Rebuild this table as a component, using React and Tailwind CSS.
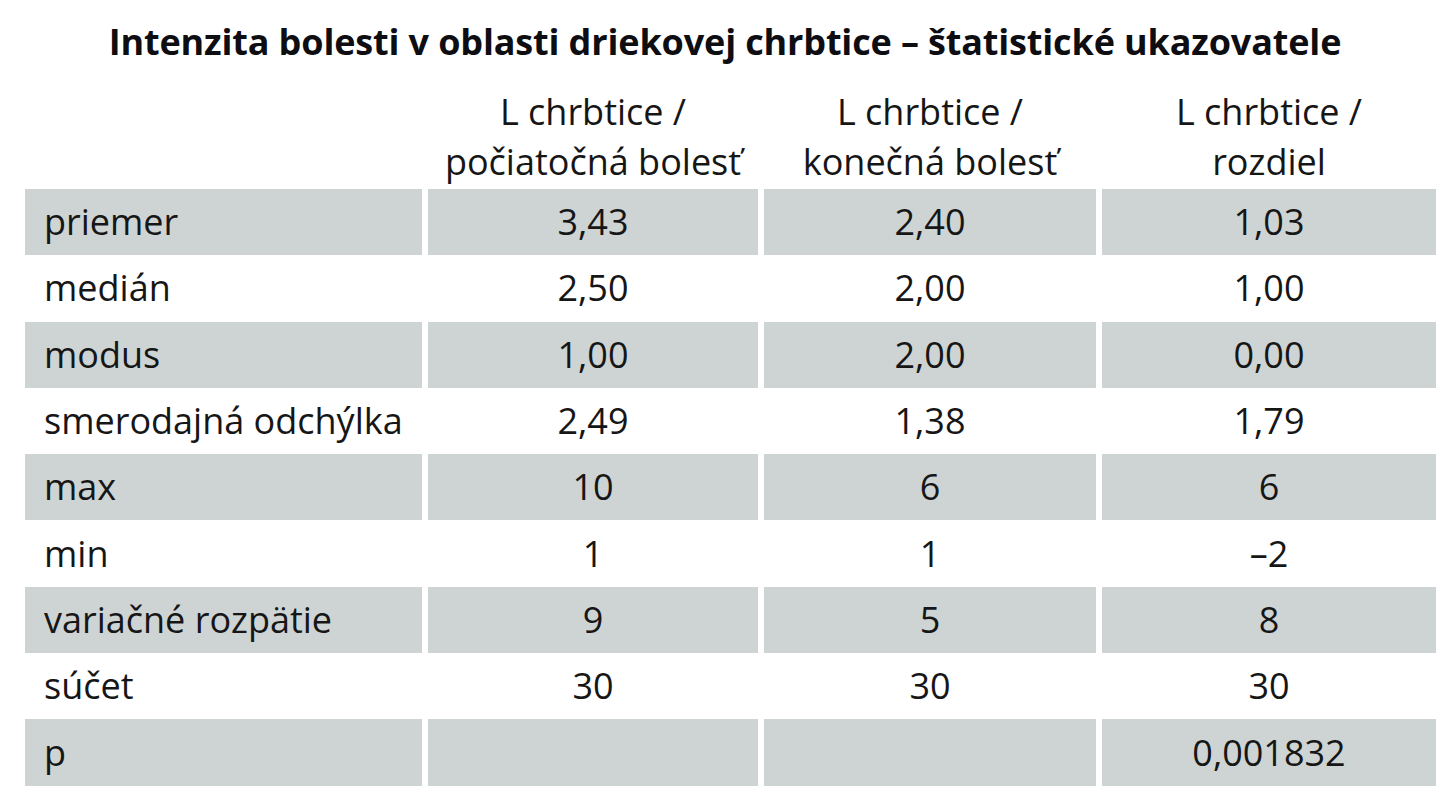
import React from "react";

const rows = [
  ["priemer", "3,43", "2,40", "1,03"],
  ["medián", "2,50", "2,00", "1,00"],
  ["modus", "1,00", "2,00", "0,00"],
  ["smerodajná odchýlka", "2,49", "1,38", "1,79"],
  ["max", "10", "6", "6"],
  ["min", "1", "1", "–2"],
  ["variačné rozpätie", "9", "5", "8"],
  ["súčet", "30", "30", "30"],
  ["p", "", "", "0,001832"],
];

const headers = [
  ["L chrbtice /", "počiatočná bolesť"],
  ["L chrbtice /", "konečná bolesť"],
  ["L chrbtice /", "rozdiel"],
];

const App = () => {
  return (
    <div
      className="w-[1450px] h-[800px] bg-white text-[#161616] overflow-hidden"
      style={{ fontFamily: "'Open Sans', 'Noto Sans', sans-serif" }}
    >
      <h1 className="h-[86px] pt-[17px] text-center text-[36px] font-bold leading-[50px] tracking-[-0.15px] text-[#0d0d12]">
        Intenzita bolesti v oblasti driekovej chrbtice – štatistické ukazovatele
      </h1>

      <div className="pl-[25px] grid grid-cols-[397px_330px_332px_334px] gap-x-[6px]">
        <div className="h-[103px]"></div>
        {headers.map((h, i) => (
          <div
            key={i}
            className="h-[103px] flex flex-col items-center justify-center text-[36px] leading-[50px] pb-[2px]"
          >
            <span>{h[0]}</span>
            <span>{h[1]}</span>
          </div>
        ))}

        {rows.map((r, i) => {
          const bg = i % 2 === 0 ? "bg-[#cdd4d3]" : "bg-white";
          return (
            <React.Fragment key={i}>
              <div
                className={`h-[66.3px] flex items-center pl-[19px] text-[36px] ${bg}`}
              >
                {r[0]}
              </div>
              {r.slice(1).map((v, j) => (
                <div
                  key={j}
                  className={`h-[66.3px] flex items-center justify-center text-[36px] ${bg}`}
                >
                  {v}
                </div>
              ))}
            </React.Fragment>
          );
        })}
      </div>
    </div>
  );
};

export default App;
